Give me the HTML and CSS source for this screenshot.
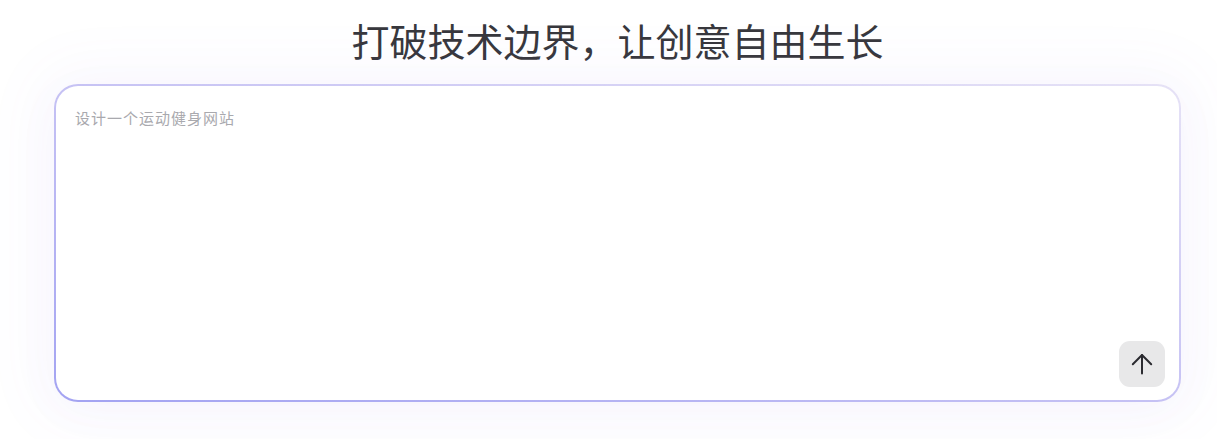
FILE: index.html
```html
<!DOCTYPE html>
<html lang="zh">
<head>
<meta charset="utf-8">
<link rel="stylesheet" href="styles.css">
</head>
<body>
<main class="page">
  <h1 class="title">打破技术边界，让创意自由生长</h1>
  <div class="prompt">
    <textarea class="prompt-input" placeholder="设计一个运动健身网站"></textarea>
    <div class="prompt-actions">
      <button class="send" type="button" aria-label="发送">
        <svg width="22" height="22" viewBox="0 0 22 22" fill="none" stroke="#2b2b30" stroke-width="2" stroke-linecap="round" stroke-linejoin="round">
          <path d="M11 20.5V2"/>
          <path d="M1.8 11.2L11 2l9.2 9.2"/>
        </svg>
      </button>
    </div>
  </div>
</main>
</body>
</html>
```
FILE: styles.css
```css
html, body {
  margin: 0;
  padding: 0;
  background: #ffffff;
}
body {
  font-family: "Noto Sans CJK SC", "Noto Sans", sans-serif;
  height: 439px;
  overflow: hidden;
}
.page {
  display: flex;
  flex-direction: column;
  align-items: center;
  padding: 0 36px 0 54px;
}
.title {
  margin: 0;
  padding-top: 15px;
  height: 84px;
  box-sizing: border-box;
  font-size: 38px;
  line-height: 50px;
  font-weight: 400;
  letter-spacing: 0;
  color: #38383d;
  text-align: center;
  width: 100%;
}
.prompt {
  width: 1127px;
  height: 318px;
  box-sizing: border-box;
  border: 2px solid transparent;
  border-radius: 24px;
  background:
    linear-gradient(#fff, #fff) padding-box,
    linear-gradient(to top right, #a3a3f2 0%, #c6c2f4 50%, #e6e2f6 100%) border-box;
  box-shadow: 0 0 60px 20px rgba(120, 100, 230, 0.04), 0 10px 50px rgba(120, 100, 230, 0.03);
  display: flex;
  flex-direction: column;
  padding: 20px 14px 13px 19px;
}
.prompt-input {
  flex: 1;
  border: none;
  outline: none;
  resize: none;
  font-family: inherit;
  font-size: 15px;
  letter-spacing: 1px;
  line-height: 24px;
  padding: 0;
  background: transparent;
  color: #333;
}
.prompt-input::placeholder {
  color: #a9a9ae;
}
.prompt-actions {
  display: flex;
  justify-content: flex-end;
}
.send {
  width: 46px;
  height: 46px;
  border: none;
  border-radius: 11px;
  background: #e8e8e9;
  display: flex;
  align-items: center;
  justify-content: center;
  padding: 0;
}
```
